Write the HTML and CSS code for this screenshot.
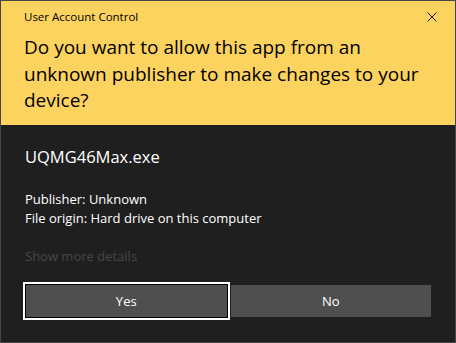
FILE: index.html
```html
<!DOCTYPE html>
<html lang="en">

<head>
    <meta charset="UTF-8">
    <meta name="viewport" content="width=device-width, initial-scale=1.0">
    <title>User Account Control</title>
    <link rel="stylesheet" href="styles.css">
</head>

<body>
    <div class="uac-window">
        <div class="uac-header">
            <div class="title-bar">
                <span class="title-text">User Account Control</span>
                <button class="close-btn" aria-label="Close">
                    <svg width="10" height="10" viewBox="0 0 10 10">
                        <path d="M0.5 0.5 L9.5 9.5 M9.5 0.5 L0.5 9.5" stroke="#1a1a1a" stroke-width="1" fill="none" />
                    </svg>
                </button>
            </div>
            <h1 class="question">Do you want to allow this app from an unknown publisher to make changes to your device?</h1>
        </div>

        <div class="uac-body">
            <div class="app-name">UQMG46Max.exe</div>

            <div class="app-info">
                <div>Publisher: Unknown</div>
                <div>File origin: Hard drive on this computer</div>
            </div>

            <a class="more-details">Show more details</a>

            <div class="button-row">
                <button class="uac-btn focused">Yes</button>
                <button class="uac-btn">No</button>
            </div>
        </div>
    </div>
</body>

</html>
```

FILE: styles.css
```css
body {
    margin: 0;
    background: #808080;
    font-family: "Open Sans", "Noto Sans", sans-serif;
}

.uac-window {
    width: 456px;
    height: 343px;
    box-sizing: border-box;
    border: 1px solid rgba(90, 90, 90, 0.65);
    background: #1f1f1f;
    display: flex;
    flex-direction: column;
}

/* yellow part */
.uac-header {
    background: #fdd35f;
    height: 124px;
    box-sizing: border-box;
    padding: 0 0 0 23px;
    color: #000;
}

.title-bar {
    display: flex;
    justify-content: space-between;
    align-items: flex-start;
    height: 33px;
}

.title-text {
    font-size: 11.5px;
    line-height: 16px;
    margin-top: 8px;
}

.close-btn {
    background: transparent;
    border: none;
    padding: 0;
    width: 46px;
    height: 32px;
    display: flex;
    align-items: center;
    justify-content: center;
}

.question {
    margin: 0;
    font-weight: 400;
    font-size: 19px;
    line-height: 26.5px;
    padding-right: 10px;
}

/* dark part */
.uac-body {
    flex: 1;
    padding: 21px 24px 0 24px;
    color: #fff;
}

.app-name {
    font-size: 16.5px;
    line-height: 22px;
}

.app-info {
    margin-top: 22px;
    font-size: 13px;
    line-height: 19px;
}

.more-details {
    display: block;
    margin-top: 19px;
    font-size: 13px;
    line-height: 18px;
    color: #474747;
}

.button-row {
    display: flex;
    gap: 4px;
    margin-top: 20px;
    margin-left: 1px;
}

.uac-btn {
    width: 201px;
    height: 32px;
    background: #4f4f4f;
    border: none;
    color: #fff;
    font-family: inherit;
    font-size: 13px;
    padding: 0;
}

.uac-btn.focused {
    box-shadow: 0 0 0 1px #000, 0 0 0 3px #fff;
}
```
